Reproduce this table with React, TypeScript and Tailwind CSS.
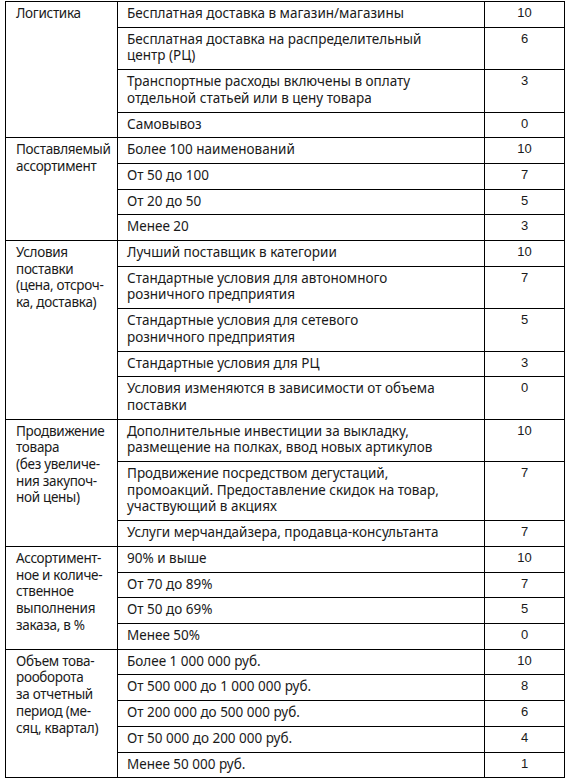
type Row = { text: string[]; score: number };
type Group = { title: string[]; rows: Row[] };

const groups: Group[] = [
  {
    title: ["Логистика"],
    rows: [
      { text: ["Бесплатная доставка в магазин/магазины"], score: 10 },
      { text: ["Бесплатная доставка на распределительный", "центр (РЦ)"], score: 6 },
      { text: ["Транспортные расходы включены в оплату", "отдельной статьей или в цену товара"], score: 3 },
      { text: ["Самовывоз"], score: 0 },
    ],
  },
  {
    title: ["Поставляемый", "ассортимент"],
    rows: [
      { text: ["Более 100 наименований"], score: 10 },
      { text: ["От 50 до 100"], score: 7 },
      { text: ["От 20 до 50"], score: 5 },
      { text: ["Менее 20"], score: 3 },
    ],
  },
  {
    title: ["Условия", "поставки", "(цена, отсроч-", "ка, доставка)"],
    rows: [
      { text: ["Лучший поставщик в категории"], score: 10 },
      { text: ["Стандартные условия для автономного", "розничного предприятия"], score: 7 },
      { text: ["Стандартные условия для сетевого", "розничного предприятия"], score: 5 },
      { text: ["Стандартные условия для РЦ"], score: 3 },
      { text: ["Условия изменяются в зависимости от объема", "поставки"], score: 0 },
    ],
  },
  {
    title: ["Продвижение", "товара", "(без увеличе-", "ния закупоч-", "ной цены)"],
    rows: [
      { text: ["Дополнительные инвестиции за выкладку,", "размещение на полках, ввод новых артикулов"], score: 10 },
      {
        text: [
          "Продвижение посредством дегустаций,",
          "промоакций. Предоставление скидок на товар,",
          "участвующий в акциях",
        ],
        score: 7,
      },
      { text: ["Услуги мерчандайзера, продавца-консультанта"], score: 7 },
    ],
  },
  {
    title: ["Ассортимент-", "ное и количе-", "ственное", "выполнения", "заказа, в %"],
    rows: [
      { text: ["90% и выше"], score: 10 },
      { text: ["От 70 до 89%"], score: 7 },
      { text: ["От 50 до 69%"], score: 5 },
      { text: ["Менее 50%"], score: 0 },
    ],
  },
  {
    title: ["Объем това-", "рооборота", "за отчетный", "период (ме-", "сяц, квартал)"],
    rows: [
      { text: ["Более 1 000 000 руб."], score: 10 },
      { text: ["От 500 000 до 1 000 000 руб."], score: 8 },
      { text: ["От 200 000 до 500 000 руб."], score: 6 },
      { text: ["От 50 000 до 200 000 руб."], score: 4 },
      { text: ["Менее 50 000 руб."], score: 1 },
    ],
  },
];

const Lines = ({ lines }: { lines: string[] }) => (
  <>
    {lines.map((l, i) => (
      <div key={i} className="whitespace-nowrap">
        {l}
      </div>
    ))}
  </>
);

export default function App() {
  return (
    <div className="bg-white w-[568px] h-[782px] pl-[5px] pt-[1px]">
      <table className="border-collapse w-[559px] table-fixed text-[13.5px] leading-[16.7px] text-[#1a1a1a] font-['Noto_Sans',sans-serif]">
        <colgroup>
          <col className="w-[112px]" />
          <col className="w-[367px]" />
          <col className="w-[80px]" />
        </colgroup>
        <tbody>
          {groups.map((g, gi) =>
            g.rows.map((r, ri) => (
              <tr key={`${gi}-${ri}`}>
                {ri === 0 && (
                  <td
                    rowSpan={g.rows.length}
                    className="border border-black align-top pl-[10px] pr-1 pt-[3px] pb-[5px] tracking-[-0.3px]"
                  >
                    <Lines lines={g.title} />
                  </td>
                )}
                <td className="border border-black align-top pl-[9px] pr-1 pt-[3px] pb-[5px]">
                  <Lines lines={r.text} />
                </td>
                <td className="border border-black align-top text-center pt-[3px] pb-[5px] text-[13px] font-['Liberation_Sans',sans-serif]">
                  {r.score}
                </td>
              </tr>
            ))
          )}
        </tbody>
      </table>
    </div>
  );
}
